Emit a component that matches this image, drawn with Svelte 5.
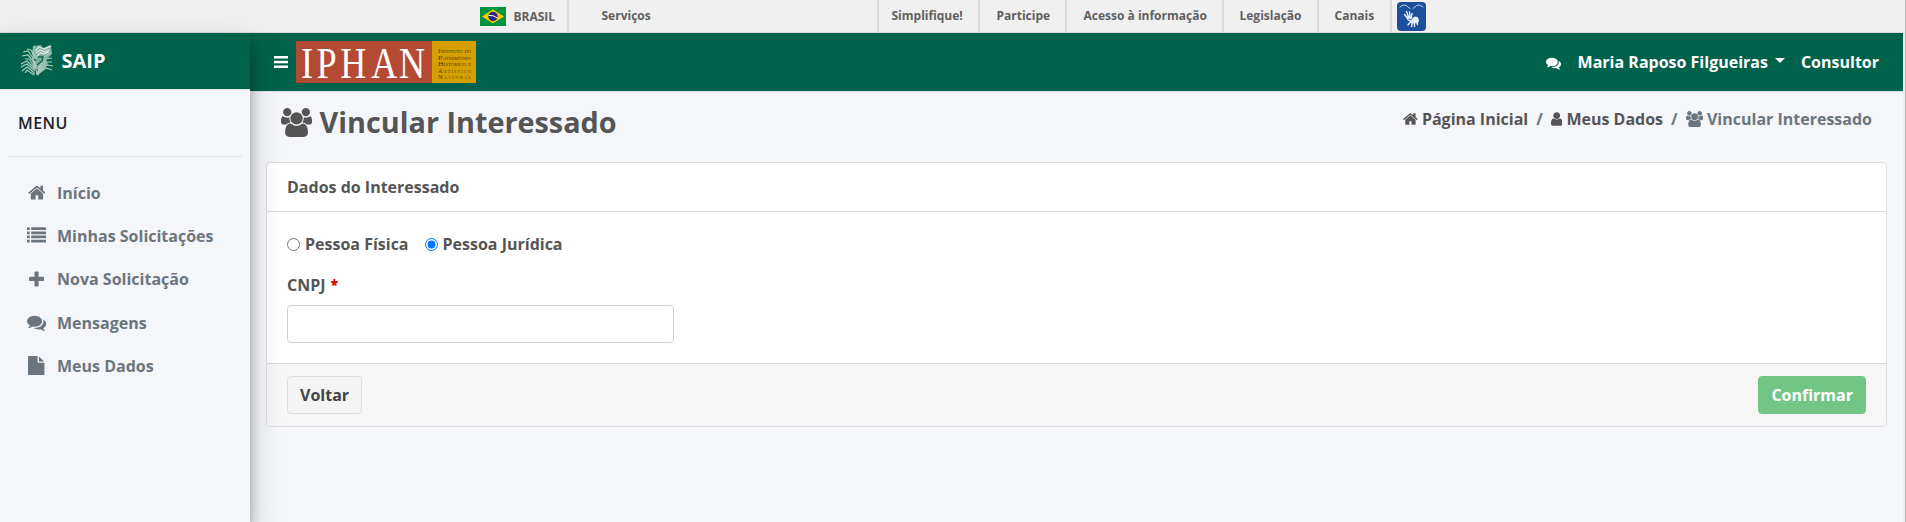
<script lang="ts">
  const links = [
    { text: 'Simplifique!', w: 101, pad: 12.5 },
    { text: 'Participe', w: 87, pad: 16.5 },
    { text: 'Acesso à informação', w: 157, pad: 16.5 },
    { text: 'Legislação', w: 94.5, pad: 15.5 },
    { text: 'Canais', w: 73.5, pad: 16 }
  ];
  const menu = [
    { icon: 'home', text: 'Início' },
    { icon: 'list', text: 'Minhas Solicitações' },
    { icon: 'plus', text: 'Nova Solicitação' },
    { icon: 'comments', text: 'Mensagens' },
    { icon: 'file', text: 'Meus Dados' }
  ];
  let kind = $state('pj');
  let cnpj = $state('');
  const logoLines = ['Instituto do', 'Patrimônio', 'Histórico e', 'Artístico', 'Nacional'];
</script>

{#snippet icon(name: string)}
  {#if name === 'home'}
    <svg class="fa home" viewBox="0 0 1664 1792"><path d="M1408 992v480q0 26-19 45t-45 19H960v-384H704v384H320q-26 0-45-19t-19-45V992q0-1 .5-3t.5-3l575-474 575 474q1 2 1 6zm223-69l-62 74q-8 9-21 11h-3q-13 0-21-7L832 424l-692 577q-12 8-24 7-13-2-21-11l-62-74q-8-10-7-23.500t11-21.500l719-599q32-26 76-26t76 26l244 204V288q0-14 9-23t23-9h192q14 0 23 9t9 23v408l219 182q10 8 11 21.500t-7 23.500z"/></svg>
  {:else if name === 'list'}
    <svg class="fa list" viewBox="0 0 1792 1792"><path d="M256 1312v192q0 13-9.500 22.500T224 1536H32q-13 0-22.500-9.500T0 1504v-192q0-13 9.500-22.500T32 1280h192q13 0 22.500 9.500T256 1312zm0-384v192q0 13-9.500 22.500T224 1152H32q-13 0-22.500-9.500T0 1120V928q0-13 9.500-22.500T32 896h192q13 0 22.500 9.500T256 928zm0-384v192q0 13-9.500 22.500T224 768H32q-13 0-22.500-9.500T0 736V544q0-13 9.500-22.500T32 512h192q13 0 22.500 9.500T256 544zm1536 768v192q0 13-9.500 22.500t-22.500 9.500H416q-13 0-22.500-9.500T384 1504v-192q0-13 9.500-22.500T416 1280h1344q13 0 22.500 9.500t9.500 22.500zM256 160v192q0 13-9.500 22.500T224 384H32q-13 0-22.500-9.500T0 352V160q0-13 9.500-22.500T32 128h192q13 0 22.500 9.500T256 160zm1536 768v192q0 13-9.500 22.500t-22.500 9.500H416q-13 0-22.500-9.500T384 1120V928q0-13 9.500-22.500T416 896h1344q13 0 22.500 9.500t9.500 22.500zm0-384v192q0 13-9.500 22.500T1760 768H416q-13 0-22.500-9.500T384 736V544q0-13 9.500-22.500T416 512h1344q13 0 22.500 9.500t9.500 22.500zm0-384v192q0 13-9.500 22.500T1760 384H416q-13 0-22.500-9.500T384 352V160q0-13 9.500-22.500T416 128h1344q13 0 22.500 9.500t9.500 22.500z"/></svg>
  {:else if name === 'plus'}
    <svg class="fa plus" viewBox="0 0 1408 1792"><path d="M1408 736v192q0 40-28 68t-68 28H896v416q0 40-28 68t-68 28H608q-40 0-68-28t-28-68v-416H96q-40 0-68-28T0 928V736q0-40 28-68t68-28h416V224q0-40 28-68t68-28h192q40 0 68 28t28 68v416h416q40 0 68 28t28 68z"/></svg>
  {:else if name === 'comments'}
    <svg class="fa comments" viewBox="0 0 1792 1792"><path d="M1408 768q0 139-94 257t-256.500 186.500T704 1280q-86 0-176-16-124 88-278 128-36 9-86 16h-3q-11 0-20.500-8t-11.500-21q-1-3-1-6.500t.5-6.500 2-6l2.500-5 3.500-5.500 4-5 4.500-5 4-4.500q5-6 23-25t26-29.500 22.500-29 25-38.500 20.500-44q-124-72-195-177T0 768q0-139 94-257t256.500-186.500T704 256t353.500 68.500T1314 511t94 257zm384 256q0 120-71 224.500T1526 1425q10 24 20.500 44t25 38.500 22.500 29 26 29.500 23 25q1 1 4 4.500t4.500 5 4 5 3.500 5.500l2.500 5 2 6 .5 6.500-1 6.500q-3 14-13 22t-22 7q-50-7-86-16-154-40-278-128-90 16-176 16-271 0-472-132 58 4 88 4 161 0 309-45t264-129q125-92 192-212t67-254q0-77-23-152 129 71 204 178t75 230z"/></svg>
  {:else if name === 'file'}
    <svg class="fa file" viewBox="0 0 1536 1792"><path d="M1024 512V40q22 14 36 28l408 408q14 14 28 36h-472zm-128 32q0 40 28 68t68 28h544v1056q0 40-28 68t-68 28H96q-40 0-68-28t-28-68V96q0-40 28-68T96 0h800v544z"/></svg>
  {:else if name === 'user'}
    <svg class="fa user" viewBox="0 0 1280 1792"><path d="M1280 1399q0 109-62.500 187t-150.500 78H213q-88 0-150.500-78T0 1399q0-85 8.500-160.500t31.500-152 58.500-131 94-89T327 832q131 128 313 128t313-128q76 0 134.500 34.500t94 89 58.500 131 31.500 152 8.500 160.500zm-256-887q0 159-112.500 271.500T640 896 368.500 783.500 256 512t112.500-271.500T640 128t271.500 112.500T1024 512z"/></svg>
  {:else if name === 'users'}
    <svg class="fa users" viewBox="0 0 1920 1792"><path d="M593 896q-162 5-265 128H194q-82 0-138-40.500T0 865q0-353 124-353 6 0 43.500 21t97.500 42.500T384 597q67 0 133-23-5 37-5 66 0 139 81 256zm1071 637q0 120-73 189.500t-194 69.500H523q-121 0-194-69.500T256 1533q0-53 3.500-103.500t14-109T300 1212t43-97.500 62-81 85.500-53.500T602 960q10 0 43 21.500t73 48 107 48 135 21.500 135-21.500 107-48 73-48 43-21.500q61 0 111.500 20t85.500 53.500 62 81 43 97.500 26.500 108.500 14 109 3.500 103.500zM640 256q0 106-75 181t-181 75-181-75-75-181 75-181T384 0t181 75 75 181zm704 384q0 159-112.500 271.500T960 1024 688.500 911.500 576 640t112.500-271.500T960 256t271.500 112.500T1344 640zm576 225q0 78-56 118.500t-138 40.500h-134q-103-123-265-128 81-117 81-256 0-29-5-66 66 23 133 23 59 0 119-21.500t97.500-42.500 43.500-21q124 0 124 353zm-128-609q0 106-75 181t-181 75-181-75-75-181 75-181 181-75 181 75 75 181z"/></svg>
  {/if}
{/snippet}

<div class="page">
  <div class="gov">
    <div class="brasil">
      <svg width="26" height="19" viewBox="0 0 26 19"><rect width="26" height="19" fill="#009440" /><path d="M2 9.500 13 2.500 24 9.500 13 16.300z" fill="#ffcb00" /><circle cx="13" cy="9.500" r="4.700" fill="#302681" /><path d="M8.700 8.400q5-.5 8.600 2.600" stroke="#fff" stroke-width="1" fill="none" /></svg>
      <span>BRASIL</span>
    </div>
    <div class="serv">Serviços</div>
    {#each links as l}
      <div class="glink" style:width="{l.w}px" style:padding-left="{l.pad}px">{l.text}</div>
    {/each}
    <svg class="libras" width="29" height="29" viewBox="0 0 29 29"><rect width="29" height="29" rx="4" fill="#1c4f9c" /><g fill="none" stroke="#e8eef8" stroke-linecap="round"><path d="M3 5q5-4 8 0l2 1.500M26 5q-5-4-8 0l-2 1.500" stroke-width=".8" /><path d="M10.500 16 7.500 12.500M11.500 15 9.500 9.500M13 15 12.500 10M14 16l1-4.500" stroke-width="1.400" /><path d="M13.500 20l-2.500 3M15.500 20l-1 4.500M17.500 20v4.500M19.500 19l1 3.500" stroke-width="1.400" /></g><path d="M9 14.500l5.500 0 1 1.500q2-2.500 5-1 2.500 3 .5 6l-6 .5-2-2q-3.500-1-4-5z" fill="#e8eef8" /><path d="M11.500 17q2.500 1.500 4-.5" stroke="#1c4f9c" stroke-width=".9" fill="none" /></svg>
  </div>

  <div class="shell">
    <aside>
      <div class="brand">
        <svg class="emblem" width="32" height="32" viewBox="0 0 32 32" fill="none" stroke="#a9c9bd" stroke-width="1.200">
          <path d="M12 2 20 1l2 3 8-3 1 9-6 6 2 4-6 7-8-3-2-8z" fill="#7fac9c" stroke="none" />
          <path d="M2 8 7 7l5 7 3 8M1 12l6-1 5 6 3 8M4 15l4 0 7 10M0 20l6-3 8 8M0 23l6-3 8 7M1 27l5-4 4 3 4 4M4 29l2-3 7 5M6 5l4 1 4 8M13 2l-1 6 3 5-1 7 2 11M30 9l-7 4-4 8-3 9M31 14l-6 1-5 6-4 9M31 18l-6 0-5 6-4 7M32 22l-6-1-6 5-3 5M31 26l-6-2-8 6M30 2l-6 5-5 2" />
          <path d="M14 7l4-4 5 2 6-3M15 9l4-3 5 2 5-2M16 12l3-3 4 1 5-2" stroke="#dcebe5" />
          <path d="M17 13l5 0-1 4-5 4M13 15l2 2" stroke="#0b6650" stroke-width="1.400" />
        </svg>
        <b>SAIP</b>
      </div>
      <h4>MENU</h4>
      <nav>
        {#each menu as m}
          <a href="#menu"><span class="ic">{@render icon(m.icon)}</span>{m.text}</a>
        {/each}
      </nav>
    </aside>

    <main>
      <header>
        <svg class="burger" width="14" height="12" viewBox="0 0 14 12" fill="#fff"><rect width="14" height="2.500" /><rect y="4.800" width="14" height="2.500" /><rect y="9.500" width="14" height="2.500" /></svg>
        <div class="logo">
          <div class="red"><svg width="136" height="42"><text transform="scale(.82 1)" x="6.100 24.900 54 91.700 125.500" y="37">IPHAN</text></svg></div>
          <div class="gold"><svg width="44" height="42">{#each logoLines as t, i}<text x="6" y={12 + i * 6.500} textLength="33" lengthAdjust={i < 3 ? 'spacingAndGlyphs' : 'spacing'}>{t}</text>{/each}</svg></div>
        </div>
        <div class="account">
          {@render icon('comments')}
          <b class="name">Maria Raposo Filgueiras</b><i class="caret"></i>
          <b>Consultor</b>
        </div>
      </header>

      <div class="title">
        <h1>{@render icon('users')}<span>Vincular Interessado</span></h1>
        <div class="crumbs">
          <span>{@render icon('home')} Página Inicial</span><em>/</em><span>{@render icon('user')} Meus Dados</span><em>/</em><span class="active">{@render icon('users')} Vincular Interessado</span>
        </div>
      </div>

      <section class="card">
        <div class="head">Dados do Interessado</div>
        <div class="body">
          <div class="radios">
            <label><input type="radio" value="pf" bind:group={kind} />Pessoa Física</label>
            <label><input type="radio" value="pj" bind:group={kind} />Pessoa Jurídica</label>
          </div>
          <label class="field" for="cnpj">CNPJ <span>*</span></label>
          <input id="cnpj" type="text" bind:value={cnpj} />
        </div>
        <div class="foot">
          <button class="back">Voltar</button>
          <button class="ok">Confirmar</button>
        </div>
      </section>
    </main>
  </div>
</div>

<style>
  * { box-sizing: border-box; }
  .page {
    height: 522px;
    display: flex;
    flex-direction: column;
    overflow: hidden;
    background: #f4f6fa;
    border-right: 1px solid #b9b9b9;
    font: 700 16px/24px 'Open Sans', 'Noto Sans', sans-serif;
    color: #555;
  }
  b { font-weight: 700; }
  .gov {
    flex: none;
    height: 33px;
    display: flex;
    padding-left: 480px;
    background: #f0f0f0;
    border-bottom: 1px solid #dcdcdc;
    font: 700 12px/32px 'Open Sans', sans-serif;
    color: #606060;
  }
  .brasil { display: flex; align-items: center; width: 89px; border-right: 2px solid #dcdcdc; }
  .brasil svg { margin-top: 1px; }
  .brasil span { margin-left: 7.500px; padding-top: 1px; }
  .serv { width: 310px; padding-left: 32.500px; border-right: 2px solid #dcdcdc; }
  .glink { border-right: 2px solid #dcdcdc; white-space: nowrap; }
  .libras { margin: 2px 0 0 5px; }
  .shell { flex: 1; display: flex; min-height: 0; }
  aside {
    width: 250px;
    flex: none;
    z-index: 2;
    background: #f4f6fa;
    box-shadow: 0 14px 28px rgba(0, 0, 0, .25), 0 10px 10px rgba(0, 0, 0, .22);
  }
  .brand {
    height: 57px;
    display: flex;
    align-items: center;
    padding-left: 21px;
    background: #00624a;
    border-bottom: 1px solid #dee2e6;
    color: #fff;
    font-size: 20px;
  }
  .brand b { margin-left: 8.500px; }
  .emblem { margin-bottom: 2px; }
  h4 {
    margin: 0 8px;
    height: 67px;
    padding: 21px 0 0 10px;
    border-bottom: 1px solid #dee2e6;
    font: 600 16px/24px 'Open Sans', sans-serif;
    letter-spacing: .4px;
    color: #212529;
  }
  nav { padding-top: 14px; }
  nav a { display: flex; align-items: center; height: 43.300px; padding-left: 24px; color: #6c757d; text-decoration: none; }
  .ic { width: 25px; margin-right: 8px; display: flex; justify-content: center; }
  .ic .fa { height: 19.200px; }
  .fa { fill: currentColor; height: 16px; width: auto; }
  main { flex: 1; min-width: 0; border-right: 2px solid #eee; }
  header {
    height: 59px;
    display: flex;
    align-items: center;
    padding: 0 24px 1px 24px;
    background: #00624a;
    border-bottom: 1px solid #dee2e6;
    color: #fff;
  }
  .logo { display: flex; margin-left: 8px; height: 42px; }
  .logo svg { display: block; overflow: visible; }
  .red { width: 136px; background: #b54a34; }
  .red text { font: 400 44px/42px 'Liberation Serif', serif; fill: #fff; }
  .gold { width: 44px; background: #d59f00; }
  .gold text { font: 400 6.300px/7px 'Liberation Serif', serif; font-variant: small-caps; fill: #4f3a0a; }
  .account { margin-left: auto; display: flex; align-items: center; }
  .account .fa { width: 15px; margin: 2px 17px 0 0; }
  .caret { border: 5px solid transparent; border-top-color: #fff; border-bottom: 0; margin: 0 16px 2px 7px; }
  .title { height: 70px; display: flex; justify-content: space-between; padding: 15px 31px 0; }
  h1 { margin: -1px 0 0; display: flex; align-items: flex-start; font: 700 28.800px/32px 'Open Sans', sans-serif; }
  h1 .fa { height: 29px; margin: 2px 7.500px 0 0; }
  .crumbs { display: flex; color: #555; }
  .crumbs em { font-style: normal; color: #6c757d; margin: 0 8px; }
  .crumbs .fa { vertical-align: -2px; }
  .crumbs .active { color: #6c757d; }
  .card { margin: 0 16px; height: 265px; background: #fff; border: 1px solid #dcdde0; border-radius: 4px; display: flex; flex-direction: column; overflow: hidden; }
  .head { height: 49px; padding: 12px 20px; border-bottom: 1px solid #dadada; }
  .body { flex: 1; padding: 20px; }
  .radios { display: flex; gap: 16px; }
  .radios label { display: flex; align-items: center; }
  .radios input { width: 13px; height: 13px; margin: 1px 5px 0 0; }
  .field { display: block; height: 24px; margin: 17px 0 8px; }
  .field span { margin-left: 1px; color: #e00000; font-size: 13.500px; font-weight: 800; line-height: 1; vertical-align: 1px; }
  #cnpj { display: block; width: 387px; height: 38px; border: 1px solid #ced0da; border-radius: 4px; padding: 6px 12px; font: inherit; color: inherit; }
  .foot { height: 63px; display: flex; justify-content: space-between; padding: 12px 20px; background: #f6f6f6; border-top: 1px solid #d8d8d8; }
  button { height: 38px; padding: 0 12px; border-radius: 4px; border: 1px solid #dcdcdc; font: 700 16px/24px 'Open Sans', sans-serif; }
  .back { background: #f4f4f4; color: #444; }
  .ok { background: #72c585; border-color: #72c585; color: #fff; }
</style>
